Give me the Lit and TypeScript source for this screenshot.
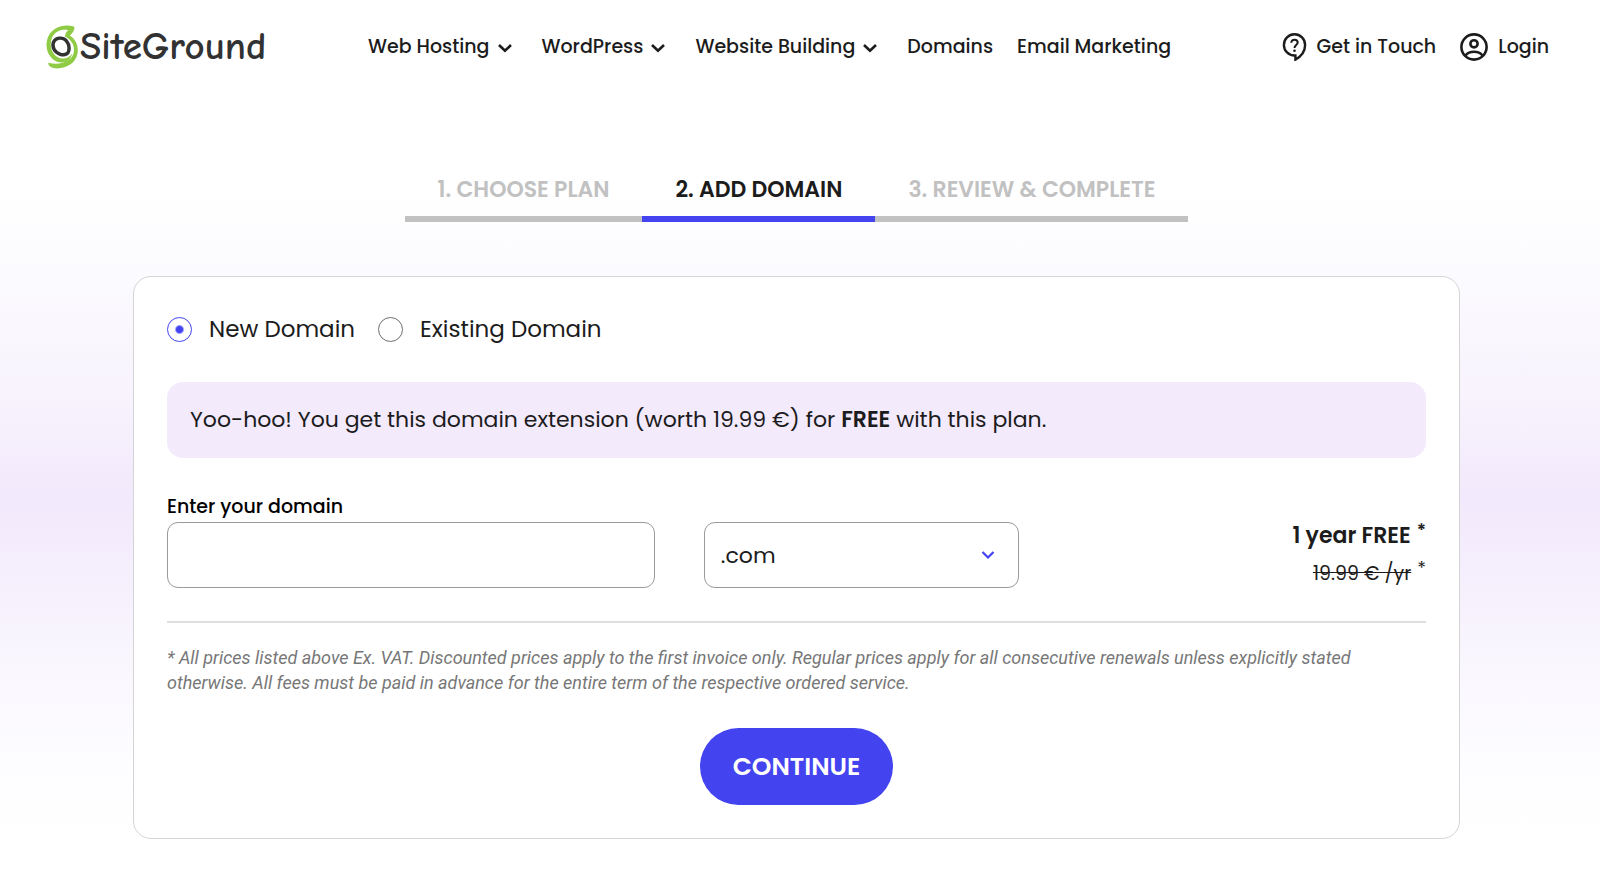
import { LitElement, html, css } from "lit";
import { customElement, state } from "lit/decorators.js";

interface NavItem {
  label: string;
  menu: boolean;
}

const NAV: NavItem[] = [
  { label: "Web Hosting", menu: true },
  { label: "WordPress", menu: true },
  { label: "Website Building", menu: true },
  { label: "Domains", menu: false },
  { label: "Email Marketing", menu: false },
];

const STEPS = ["1. Choose plan", "2. Add domain", "3. Review & complete"];

const base = css`
  :host {
    display: block;
    font-family: Poppins, Inter, sans-serif;
    color: #1c1c1c;
  }
  * {
    box-sizing: border-box;
  }
`;

@customElement("site-header")
export class SiteHeader extends LitElement {
  static styles = [
    base,
    css`
      .bar {
        display: flex;
        align-items: center;
        height: 94px;
        padding: 0 51px 0 45px;
        font-size: 19px;
        line-height: 30px;
        font-weight: 500;
      }
      a {
        color: inherit;
        text-decoration: none;
        white-space: nowrap;
      }
      .logo {
        display: flex;
        align-items: center;
        width: 323px;
        font-family: "Comic Neue", Lato, sans-serif;
        font-size: 39px;
        line-height: 46px;
        font-weight: 700;
        color: #323232;
      }
      .mark {
        width: 35px;
        height: 46px;
      }
      .nav {
        display: flex;
        gap: 24px;
      }
      .item {
        display: flex;
        align-items: center;
        gap: 8px;
      }
      .chevron {
        width: 20px;
        height: 14px;
      }
      .account {
        display: flex;
        gap: 24px;
        margin-left: auto;
      }
      .link {
        display: flex;
        align-items: center;
        gap: 10px;
      }
      .help {
        width: 25px;
        height: 28px;
      }
      .user {
        width: 28px;
        height: 28px;
      }
    `,
  ];

  render() {
    return html`
      <header class="bar">
        <a class="logo" href="#" aria-label="SiteGround">
          <svg class="mark" viewBox="0 0 35 46" fill="none">
            <path
              d="M29 2.500C19 -.5 8 3 3.500 12C-1 22 2.500 33 11 37.200C18 40.500 25.500 37.500 27.200 29.500C23.500 34.500 18 36 12.500 33C6 29 4.200 20.500 7 13.800C10 7 17 4.800 23.500 6.200C26 6.600 29.500 5.500 29 2.500Z"
              fill="#8fcb44"
            />
            <path
              d="M29.500 3C24.500 4.800 20 7.500 20 12.500C26 15.500 29.300 20.500 29 26.500C28.500 36.500 17 41.800 3.500 38.800C2.500 42.500 8 45 14.500 44.300C25.500 43.200 33 36 32.800 25.800C32.700 19.500 29.500 14.500 24.800 11.500C27 9.500 29.500 7 29.500 3Z"
              fill="#8fcb44"
            />
            <path
              d="M8.600 18C10.500 13.600 17.500 12.600 21.400 16.800C24.800 20.800 25 27.500 21.800 29.800C17.800 32.300 11.200 29.600 8.900 25C7.700 22.600 7.700 20 8.600 18Z"
              stroke="#323232"
              stroke-width="3.400"
            />
          </svg>
          <span>SiteGround</span>
        </a>
        <nav class="nav">
          ${NAV.map(
            (n) => html`
              <a class="item" href="#">
                ${n.label}
                ${n.menu
                  ? html`<svg class="chevron" viewBox="0 0 20 14" fill="none">
                      <path d="M1 5L7 10.800L13 5" stroke="#1c1c1c" stroke-width="2.600" />
                    </svg>`
                  : null}
              </a>
            `
          )}
        </nav>
        <div class="account">
          <a class="link" href="#">
            <svg class="help" viewBox="0 0 25 28" fill="none">
              <path
                d="M12.500 1.300A10.600 10.600 0 0 0 12.500 22.500L13.400 22.500L13.400 26.600C18.600 23.600 23.100 18.500 23.100 11.900A10.600 10.600 0 0 0 12.500 1.300Z"
                stroke="#1c1c1c"
                stroke-width="2.400"
              />
              <path
                d="M9.300 9.800C9.300 7.900 10.700 6.700 12.500 6.700C14.300 6.700 15.700 7.900 15.700 9.600C15.700 12 12.500 12.100 12.500 15"
                stroke="#1c1c1c"
                stroke-width="2"
              />
              <circle cx="12.500" cy="17.800" r="1.300" fill="#1c1c1c" />
            </svg>
            Get in Touch
          </a>
          <a class="link" href="#">
            <svg class="user" viewBox="0 0 28 28" fill="none" stroke="#1c1c1c" stroke-width="2.600">
              <circle cx="14" cy="14" r="12.600" />
              <circle cx="14" cy="10.800" r="3.600" />
              <path d="M5.500 22.500C7.500 20 10.500 18.800 14 18.800C17.500 18.800 20.500 20 22.500 22.500" />
            </svg>
            Login
          </a>
        </div>
      </header>
    `;
  }
}

@customElement("order-steps")
export class OrderSteps extends LitElement {
  static styles = [
    base,
    css`
      .steps {
        display: flex;
        justify-content: center;
        margin: 0;
        padding: 0;
        list-style: none;
        font-size: 22px;
        line-height: 34px;
        font-weight: 600;
        text-transform: uppercase;
        color: #c1c1c1;
      }
      .step {
        padding: 0 33px 9px;
        border-bottom: 6px solid #c1c1c1;
        white-space: nowrap;
      }
      .current {
        color: #1c1c1c;
        border-color: #4343f0;
      }
    `,
  ];

  render() {
    return html`
      <ol class="steps">
        ${STEPS.map(
          (s, i) => html`<li class="step ${i === 1 ? "current" : ""}">${s}</li>`
        )}
      </ol>
    `;
  }
}

@customElement("domain-form")
export class DomainForm extends LitElement {
  @state() private kind = "new";

  static styles = [
    base,
    css`
      .card {
        display: flex;
        flex-direction: column;
        padding: 33px;
        border: 1px solid #d4d4d6;
        border-radius: 18px;
        background: #fff;
      }
      .kinds {
        display: flex;
        gap: 23px;
        margin-bottom: 34px;
        font-size: 23px;
        line-height: 38px;
      }
      .kind {
        display: flex;
        align-items: center;
        gap: 17px;
      }
      .radio {
        appearance: none;
        width: 25px;
        height: 25px;
        margin: 0;
        border: 1px solid #707070;
        border-radius: 50%;
        background: #fff;
      }
      .radio:checked {
        border-color: #4343f0;
        background: radial-gradient(circle, #4343f0 3px, #fff 5px);
      }
      .banner {
        margin: 0 0 34px;
        padding: 20px 23px;
        border-radius: 16px;
        background: #f3eafc;
        font-size: 22px;
        line-height: 36px;
      }
      .banner b {
        font-weight: 600;
      }
      .fields {
        display: grid;
        grid-template-columns: 487fr 315fr 357fr;
        column-gap: 49px;
        padding-bottom: 33px;
        border-bottom: 2px solid #dedede;
      }
      .label {
        grid-column: 1 / -1;
        margin-bottom: 1px;
        font-size: 19px;
        line-height: 29px;
        font-weight: 500;
        color: #000;
      }
      .input,
      .select {
        width: 100%;
        height: 66px;
        padding: 0 16px;
        border: 1px solid #9a9a9a;
        border-radius: 11px;
        background: #fff;
        color: inherit;
        font: inherit;
        font-size: 22px;
      }
      .select {
        appearance: none;
      }
      .picker {
        display: grid;
        align-items: center;
      }
      .picker > * {
        grid-area: 1 / 1;
      }
      .arrow {
        justify-self: end;
        width: 14px;
        height: 10px;
        margin-right: 24px;
        pointer-events: none;
      }
      .price {
        text-align: right;
        white-space: nowrap;
      }
      .now,
      .was {
        display: flex;
        justify-content: flex-end;
        gap: 6px;
      }
      .now {
        font-size: 22px;
        line-height: 28px;
        font-weight: 600;
      }
      .was {
        margin-top: 10px;
        font-size: 19px;
        line-height: 28px;
      }
      .star {
        font-size: 18px;
        line-height: 16px;
      }
      .note {
        margin: 22px 0 33px;
        font-family: Roboto, Inter, sans-serif;
        font-size: 18px;
        line-height: 25px;
        font-style: italic;
        color: #777;
      }
      .submit {
        align-self: center;
        padding: 20px 33px;
        border: 0;
        border-radius: 39px;
        background: #4343f0;
        color: #fff;
        font: inherit;
        font-size: 25px;
        line-height: 37px;
        font-weight: 600;
      }
    `,
  ];

  private radio(value: string, text: string) {
    return html`
      <label class="kind">
        <input
          class="radio"
          type="radio"
          name="kind"
          .checked=${this.kind === value}
          @change=${() => (this.kind = value)}
        />
        ${text}
      </label>
    `;
  }

  render() {
    return html`
      <form class="card" @submit=${(e: Event) => e.preventDefault()}>
        <div class="kinds">
          ${this.radio("new", "New Domain")} ${this.radio("existing", "Existing Domain")}
        </div>
        <p class="banner">
          Yoo-hoo! You get this domain extension (worth 19.99 €) for <b>FREE</b> with this plan.
        </p>
        <div class="fields">
          <label class="label" for="domain">Enter your domain</label>
          <input class="input" id="domain" type="text" />
          <div class="picker">
            <select class="select" aria-label="Domain extension">
              <option>.com</option>
            </select>
            <svg class="arrow" viewBox="0 0 14 10" fill="none">
              <path d="M1.500 2L7 7.500L12.500 2" stroke="#4343f0" stroke-width="2.200" />
            </svg>
          </div>
          <div class="price">
            <div class="now"><span>1 year FREE</span><span class="star">*</span></div>
            <div class="was"><s>19.99 € /yr</s><span class="star">*</span></div>
          </div>
        </div>
        <p class="note">
          * All prices listed above Ex. VAT. Discounted prices apply to the first invoice only.
          Regular prices apply for all consecutive renewals unless explicitly stated otherwise. All
          fees must be paid in advance for the entire term of the respective ordered service.
        </p>
        <button class="submit" type="submit">CONTINUE</button>
      </form>
    `;
  }
}

@customElement("app-root")
export class AppRoot extends LitElement {
  static styles = [
    base,
    css`
      :host {
        min-height: 100vh;
        background: #fff;
      }
      .main {
        display: flex;
        flex-direction: column;
        gap: 54px;
        padding: 79px 140px 44px 133px;
        background: linear-gradient(
          #fff 12%,
          #fbfafe 24%,
          #f8f3fd 38%,
          #f2e9fc 51%,
          #f6f0fd 63%,
          #faf8fe 74%,
          #fdfcff 84%,
          #fff 94%
        );
      }
    `,
  ];

  render() {
    return html`
      <site-header></site-header>
      <main class="main">
        <order-steps></order-steps>
        <domain-form></domain-form>
      </main>
    `;
  }
}
